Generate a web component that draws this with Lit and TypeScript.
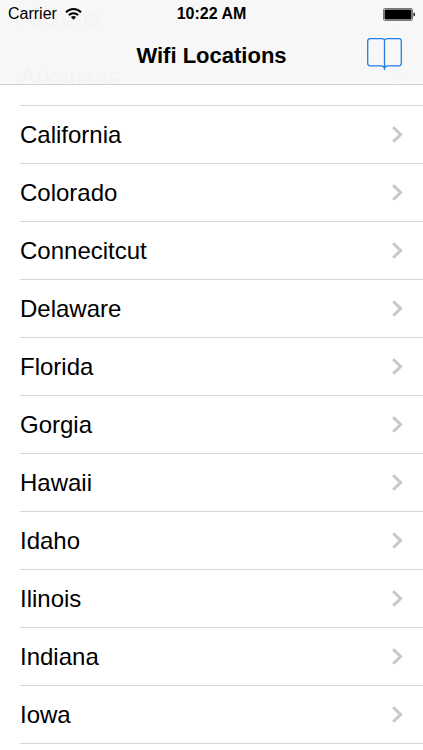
import { LitElement, html, css } from "lit";
import { customElement, property } from "lit/decorators.js";

const LOCATIONS = [
  "Arizona", "Arkansas", "California", "Colorado", "Connecitcut", "Delaware", "Florida",
  "Gorgia", "Hawaii", "Idaho", "Ilinois", "Indiana", "Iowa",
];

@customElement("status-bar")
export class StatusBar extends LitElement {
  static styles = css`
    :host {
      display: grid;
      grid-template-columns: 1fr auto 1fr;
      align-items: center;
      height: 28px;
      padding: 0 8px;
      font-size: 16px;
      line-height: 20px;
    }
    .carrier { display: flex; align-items: center; gap: 8px; }
    .time { font-weight: bold; }
    .battery { justify-self: end; }
    svg { display: block; }
  `;

  render() {
    return html`
      <div class="carrier">
        <span>Carrier</span>
        <svg width="17" height="14" viewBox="0 0 17 14" fill="none" stroke="#000" stroke-width="2" aria-hidden="true">
          <path d="M1 5.2C5.2 .9 11.8 .9 16 5.2" />
          <path d="M3.8 8.1C6.5 5.5 10.5 5.5 13.2 8.1" />
          <path d="M5.9 10.1Q8.5 7.9 11.1 10.1L8.5 12.8Z" fill="#000" stroke="none" />
        </svg>
      </div>
      <time class="time">10:22 AM</time>
      <svg class="battery" width="32" height="13" viewBox="0 0 32 13" aria-hidden="true">
        <rect x=".5" y=".5" width="29" height="12" rx="1.5" fill="#fff" stroke="#777" />
        <rect x="1.5" y="1.5" width="27" height="10" rx="1" fill="#000" />
        <path d="M30.5 4.5q1.5 0 1.5 2t-1.5 2z" fill="#000" />
      </svg>
    `;
  }
}

@customElement("location-row")
export class LocationRow extends LitElement {
  @property() name = "";

  static styles = css`
    :host { display: block; }
    .row {
      display: flex;
      align-items: center;
      justify-content: space-between;
      box-sizing: border-box;
      height: 58px;
      margin-left: 20px;
      padding-right: 20px;
      border-bottom: 1px solid #d6d6d8;
      color: #000;
      font-size: 24px;
      line-height: 28px;
      text-decoration: none;
    }
    svg { display: block; }
  `;

  render() {
    return html`
      <a class="row" href="#${this.name.toLowerCase()}">
        <span>${this.name}</span>
        <svg width="11" height="17" viewBox="0 0 11 17" fill="none" stroke="#c7c7cc" stroke-width="3" aria-hidden="true">
          <path d="M1.2 1.2L8.6 8.5L1.2 15.8" />
        </svg>
      </a>
    `;
  }
}

@customElement("app-root")
export class AppRoot extends LitElement {
  static styles = css`
    :host {
      display: block;
      position: relative;
      min-height: 100vh;
      overflow: hidden;
      background: #fff;
      color: #000;
      font-family: "Liberation Sans", Arial, Helvetica, sans-serif;
    }
    .header {
      position: absolute;
      inset: 0 0 auto;
      z-index: 1;
      background: rgba(247, 247, 247, 0.985);
      border-bottom: 1px solid #d2d2d2;
    }
    .nav {
      display: grid;
      grid-template-columns: 1fr auto 1fr;
      align-items: center;
      height: 56px;
      padding: 0 20px;
    }
    .title {
      grid-column: 2;
      margin: 0;
      font-size: 22px;
      line-height: 28px;
      font-weight: bold;
    }
    .book {
      justify-self: end;
      padding: 0;
      border: 0;
      background: none;
      cursor: pointer;
    }
    .book svg { display: block; }
    /* The list is scrolled so its first rows lie under the translucent header. */
    .list {
      margin: -10px 0 0;
      padding: 0;
      list-style: none;
    }
  `;

  render() {
    return html`
      <header class="header">
        <status-bar></status-bar>
        <div class="nav">
          <h1 class="title">Wifi Locations</h1>
          <button class="book" aria-label="Bookmarks">
            <svg width="37" height="36" viewBox="0 4 37 36" fill="none" stroke="#1f7fe8" stroke-width="1.3">
              <path d="M18.5 7.5V34" />
              <path d="M18.5 6.5Q17.8 4.7 15.8 4.7H4.2Q1.7 4.7 1.7 7.2V29.3Q1.7 31.8 4.2 31.8H15.5Q17.6 31.8 18.5 34.6Q19.4 31.8 21.5 31.8H32.8Q35.3 31.8 35.3 29.3V7.2Q35.3 4.7 32.8 4.7H21.2Q19.2 4.7 18.5 6.5Z" />
            </svg>
          </button>
        </div>
      </header>
      <ul class="list">
        ${LOCATIONS.map((name) => html`<li><location-row .name=${name}></location-row></li>`)}
      </ul>
    `;
  }
}
